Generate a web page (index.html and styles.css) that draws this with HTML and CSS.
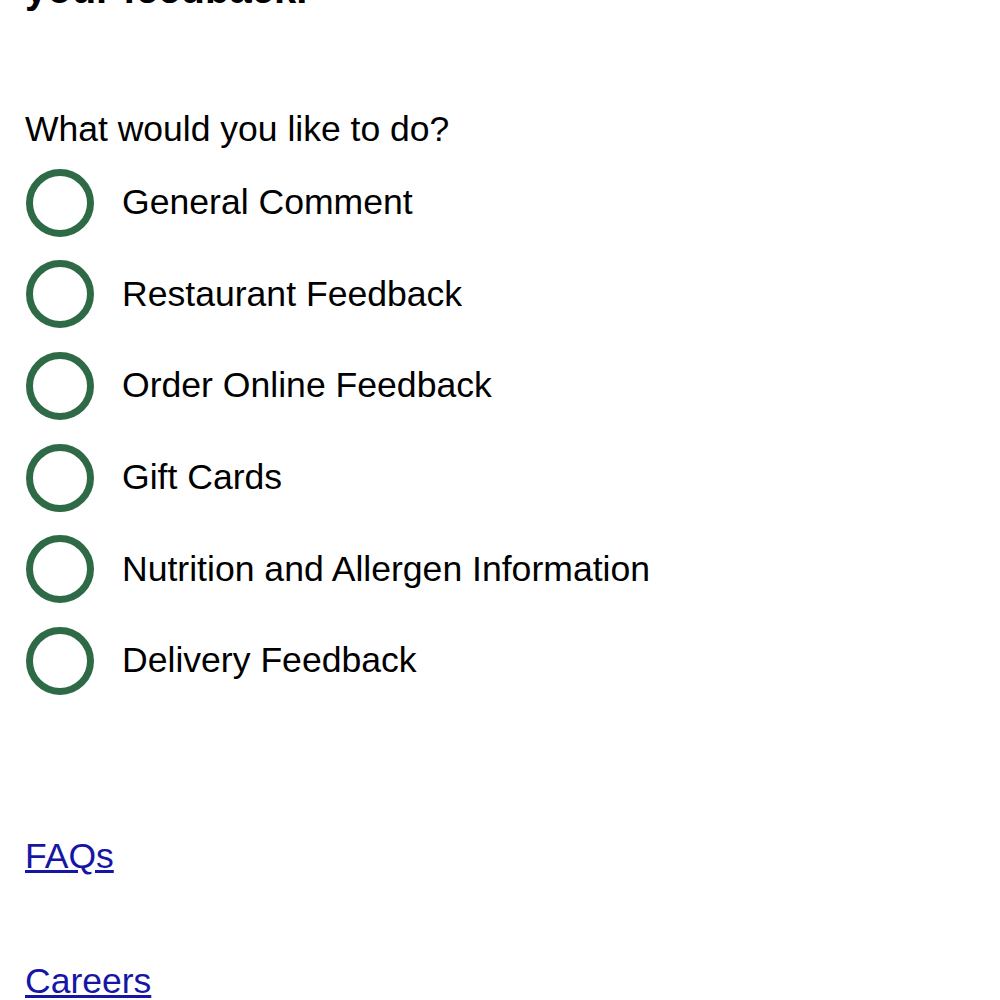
FILE: index.html
```html
<!DOCTYPE html>
<html lang="en">
<head>
    <meta charset="UTF-8">
    <title>Feedback</title>
    <link rel="stylesheet" href="styles.css">
</head>
<body>
<div id="page">
    <h1 class="title">your feedback.</h1>
    <form class="topic-form">
        <p class="question">What would you like to do?</p>
        <div class="options">
            <label class="option"><input type="radio" name="topic" value="general"/> <span>General Comment</span></label>
            <label class="option"><input type="radio" name="topic" value="restaurant"/> <span>Restaurant Feedback</span></label>
            <label class="option"><input type="radio" name="topic" value="online"/> <span>Order Online Feedback</span></label>
            <label class="option"><input type="radio" name="topic" value="gift"/> <span>Gift Cards</span></label>
            <label class="option"><input type="radio" name="topic" value="nutrition"/> <span>Nutrition and Allergen Information</span></label>
            <label class="option"><input type="radio" name="topic" value="delivery"/> <span>Delivery Feedback</span></label>
        </div>
    </form>
    <div class="links">
        <a href="#">FAQs</a>
        <a href="#">Careers</a>
    </div>
</div>
</body>
</html>
```

FILE: styles.css
```css
body {
    margin: 0;
    font-family: "Liberation Sans", Arial, sans-serif;
    color: #000;
    background: #fff;
}
#page {
    padding: 0 25px;
}
.title {
    font-size: 40px;
    font-weight: bold;
    margin: -33px 0 0 0;
}
.topic-form {
    margin-top: 97px;
}
.question {
    font-size: 35.5px;
    margin: 0 0 7px 0;
}
.options {
    display: flex;
    flex-direction: column;
}
.option {
    display: flex;
    align-items: center;
    gap: 28px;
    height: 91.6px;
    font-size: 35.6px;
}
.option input {
    appearance: none;
    -webkit-appearance: none;
    box-sizing: border-box;
    width: 68px;
    height: 68px;
    margin: 0 0 0 1px;
    border: 7px solid #2e6a46;
    border-radius: 50%;
    background: #fff;
    flex-shrink: 0;
}
.links {
    display: flex;
    flex-direction: column;
    align-items: flex-start;
    gap: 84px;
    margin-top: 129px;
}
.links a {
    font-size: 35.5px;
    color: #1616a6;
}
```
